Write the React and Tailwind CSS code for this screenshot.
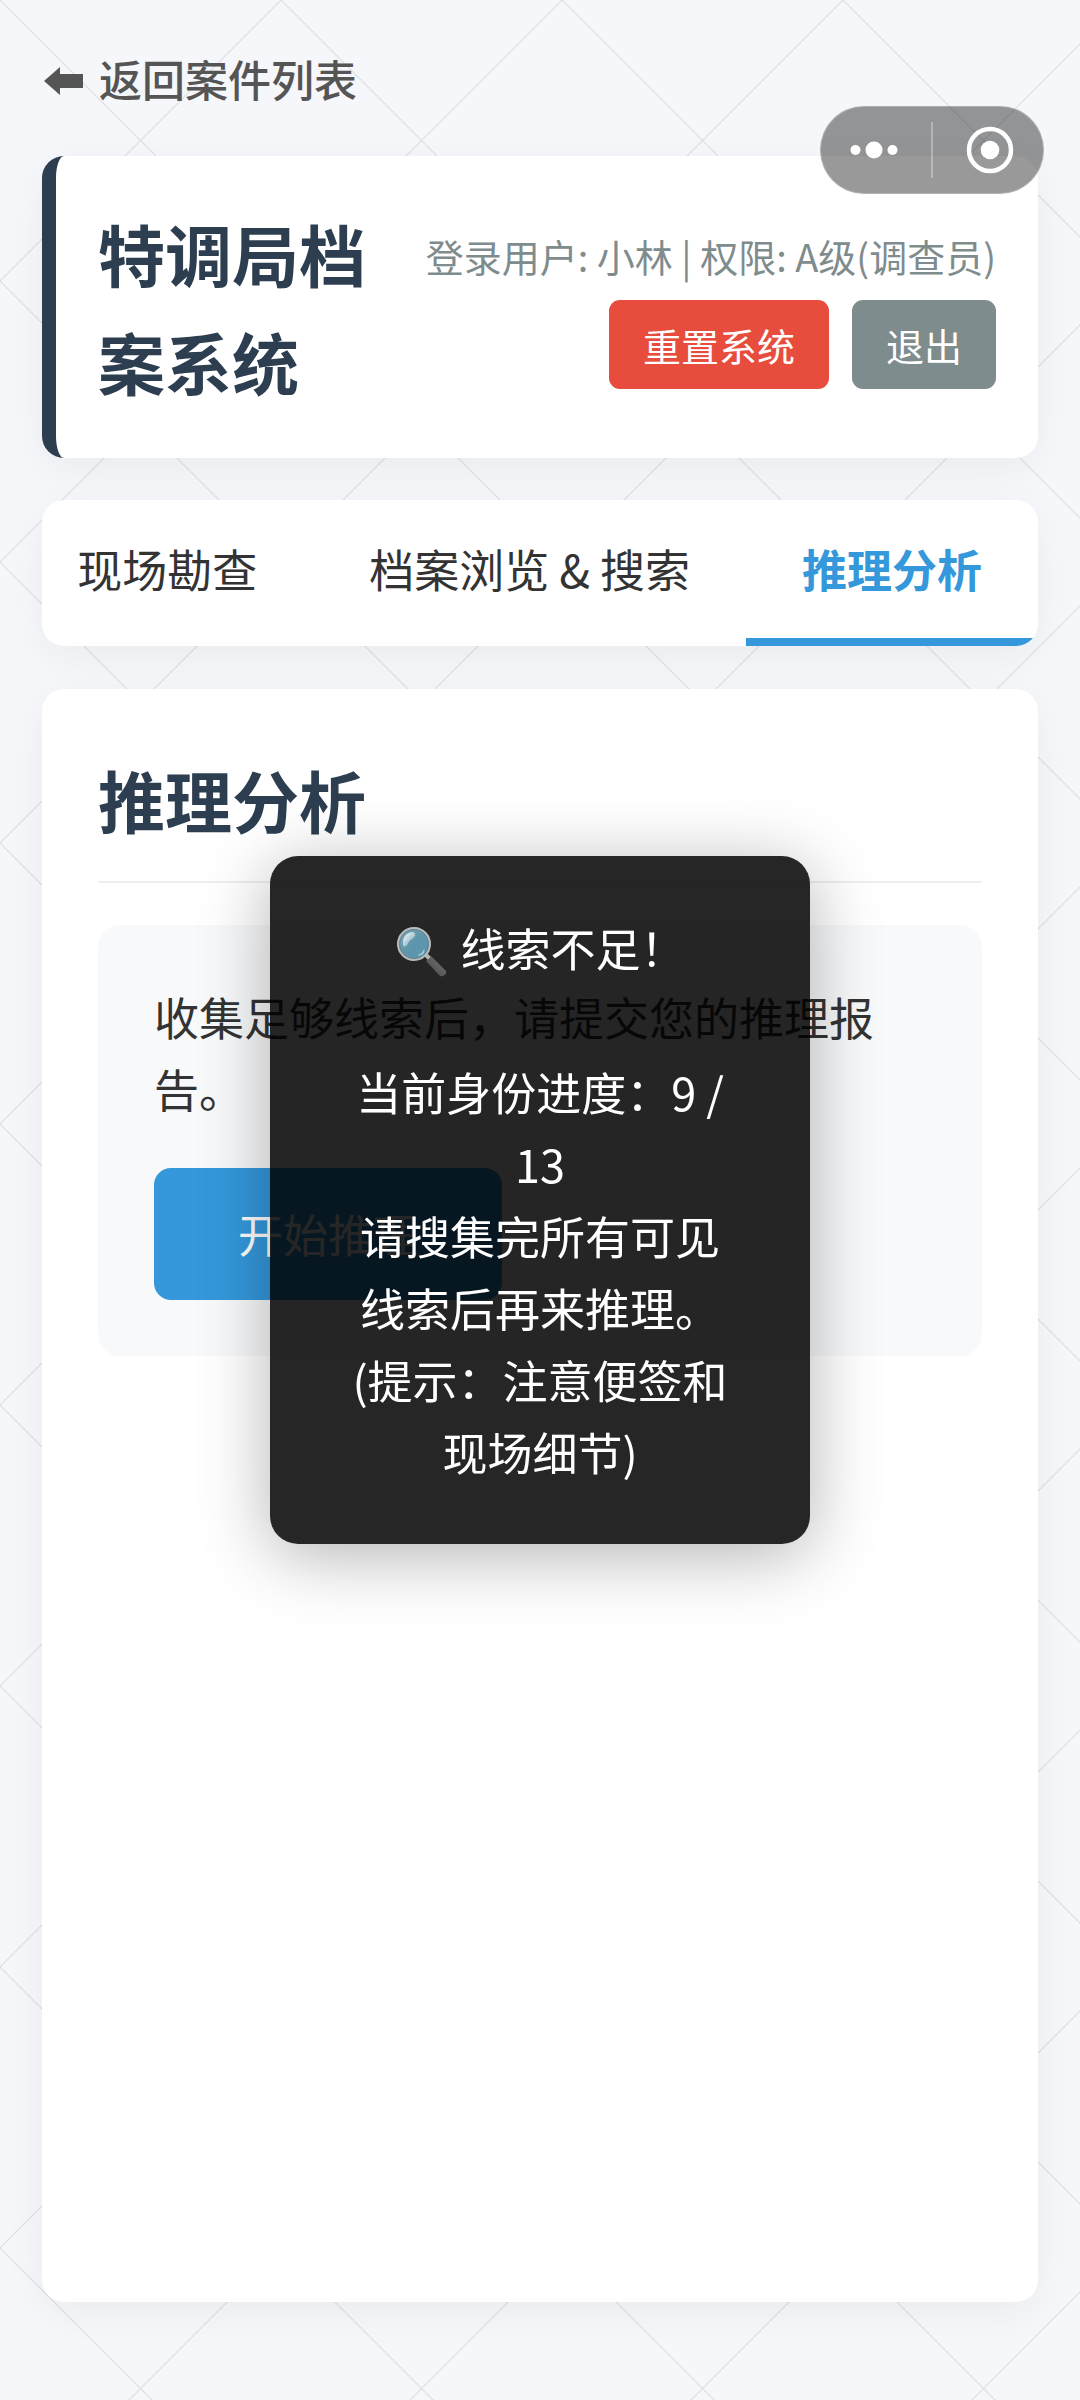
const tabs = ["现场勘查", "档案浏览 & 搜索", "推理分析"];
const activeTab = "推理分析";

function BackArrow() {
  return (
    <svg className="h-[36px] w-[42px] shrink-0" viewBox="0 0 42 36" aria-hidden="true">
      <path d="M2 21 18 7V14H41V28H18V35Z" fill="#555555" />
    </svg>
  );
}

function Magnifier() {
  return (
    <svg className="inline-block h-[56px] w-[56px] align-middle" viewBox="0 4 56 56" role="img" aria-label="放大镜">
      <defs>
        <linearGradient id="lens" x1="0" y1="0" x2="1" y2="1">
          <stop offset="0" stopColor="#76aabc" />
          <stop offset="0.5" stopColor="#5d95ab" />
          <stop offset="1" stopColor="#5a97b0" />
        </linearGradient>
        <linearGradient id="glare" x1="0" y1="0" x2="1" y2="1">
          <stop offset="0" stopColor="#ffffff" stopOpacity="0.95" />
          <stop offset="1" stopColor="#ffffff" stopOpacity="0.1" />
        </linearGradient>
        <linearGradient id="grip" x1="0" y1="1" x2="1" y2="0">
          <stop offset="0" stopColor="#424242" />
          <stop offset="1" stopColor="#7a7a7a" />
        </linearGradient>
      </defs>
      <path d="M30 33 33 30 37 34 34 37Z" fill="#b0b6b8" />
      <path d="M32 38 Q35 37 37 33 L52 48 Q53 51 49 53 Q47 54 45 52Z" fill="url(#grip)" />
      <circle cx="20" cy="21" r="16" fill="url(#lens)" stroke="#b9bcbd" strokeWidth="2" />
      <circle cx="20" cy="21" r="14.500" fill="none" stroke="#6f8087" strokeWidth="1" />
      <path d="M9 21C8 14 13 9 19 9C23 10 21 14 18 16C14 18 14 22 12 23C10 24 9 23 9 21Z" fill="url(#glare)" />
      <path d="M23 32C27 31 29 29 30 26C32 29 28 34 23 32Z" fill="#b9dbe6" opacity="0.8" />
    </svg>
  );
}

function Capsule() {
  return (
    <div className="fixed top-[106px] right-[36px] z-30 flex h-[88px] w-[224px] items-center rounded-full border border-white/25 bg-black/40">
      <button type="button" aria-label="更多" className="flex h-full flex-1 items-center justify-center pr-[4px]">
        <svg className="h-[20px] w-[50px]" viewBox="0 0 50 20" fill="white">
          <circle cx="6.500" cy="10" r="5" />
          <circle cx="25" cy="10" r="8.500" />
          <circle cx="43.500" cy="10" r="5" />
        </svg>
      </button>
      <span className="h-[56px] w-[2px] bg-white/30" />
      <button type="button" aria-label="关闭" className="flex h-full flex-1 items-center justify-center pl-[4px]">
        <svg className="h-[48px] w-[48px]" viewBox="0 0 48 48">
          <circle cx="24" cy="24" r="21" fill="none" stroke="white" strokeWidth="4.500" />
          <circle cx="24" cy="24" r="9.300" fill="white" />
        </svg>
      </button>
    </div>
  );
}

function Toast() {
  return (
    <div
      role="alert"
      className="fixed top-1/2 left-1/2 z-20 w-1/2 -translate-x-1/2 -translate-y-1/2 rounded-[28px] bg-black/85 px-[80px] py-[56px] text-center text-white shadow-[0_11px_70px_rgba(0,0,0,0.3)]"
    >
      <p>
        <Magnifier /> 线索不足！
      </p>
      <br />
      <p>当前身份进度：9 / 13</p>
      <p>请搜集完所有可见线索后再来推理。</p>
      <p>(提示：注意便签和现场细节)</p>
    </div>
  );
}

export default function App() {
  return (
    <div
      lang="zh-CN"
      className="flex min-h-screen flex-col bg-[#f5f7fa] bg-[linear-gradient(45deg,transparent_calc(50%-1px),#dddfe2_50%,transparent_calc(50%+1px)),linear-gradient(-45deg,transparent_calc(50%-1px),#dddfe2_50%,transparent_calc(50%+1px))] bg-[length:281px_281px] px-[42px] pt-[42px] pb-[98px] font-['Noto_Sans_CJK_SC',sans-serif] text-[45px] leading-[72px] text-[#333333]"
    >
      <a href="#cases" className="mb-[42px] flex items-center gap-[15px] self-start text-[43px] font-medium text-[#555555]">
        <BackArrow />
        返回案件列表
      </a>

      <header className="mb-[42px] flex items-center justify-between rounded-[22px] border-l-[14px] border-[#2c3e50] bg-white px-[42px] py-[43px] shadow-[0_11px_42px_rgba(0,0,0,0.05)]">
        <h1 className="text-[67px] leading-[108px] font-bold text-[#2c3e50]">特调局档案系统</h1>
        <div className="shrink-0 text-right text-[38px] leading-[61px] text-[#7f8c8d]">
          <p className="mb-[14px]">登录用户: 小林 | 权限: A级(调查员)</p>
          <div className="flex justify-end gap-[23px] text-white">
            <button type="button" className="rounded-[11px] bg-[#e74c3c] px-[34px] py-[14px]">重置系统</button>
            <button type="button" className="rounded-[11px] bg-[#7f8c8d] px-[34px] py-[14px]">退出</button>
          </div>
        </div>
      </header>

      <nav className="mb-[43px] flex justify-end overflow-hidden rounded-[22px] bg-white shadow-[0_11px_42px_rgba(0,0,0,0.05)]">
        {tabs.map((tab) => (
          <button
            key={tab}
            type="button"
            className={
              tab === activeTab
                ? "shrink-0 border-b-8 border-[#3498db] px-[56px] py-[33px] font-bold whitespace-nowrap text-[#3498db]"
                : "shrink-0 border-b-8 border-transparent px-[56px] py-[33px] whitespace-nowrap"
            }
          >
            {tab}
          </button>
        ))}
      </nav>

      <main className="flex-1 rounded-[22px] bg-white p-[56px] shadow-[0_11px_42px_rgba(0,0,0,0.05)]">
        <h2 className="mb-[42px] border-b-2 border-[#eeeeee] pb-[28px] text-[67px] leading-[108px] font-bold text-[#2c3e50]">
          推理分析
        </h2>
        <section className="rounded-[22px] bg-[#f8f9fa] p-[56px]">
          <p className="mb-[43px]">收集足够线索后，请提交您的推理报告。</p>
          <button type="button" className="block rounded-[17px] bg-[#3498db] px-[84px] py-[30px] text-white">开始推理</button>
        </section>
      </main>

      <Toast />
      <Capsule />
    </div>
  );
}
